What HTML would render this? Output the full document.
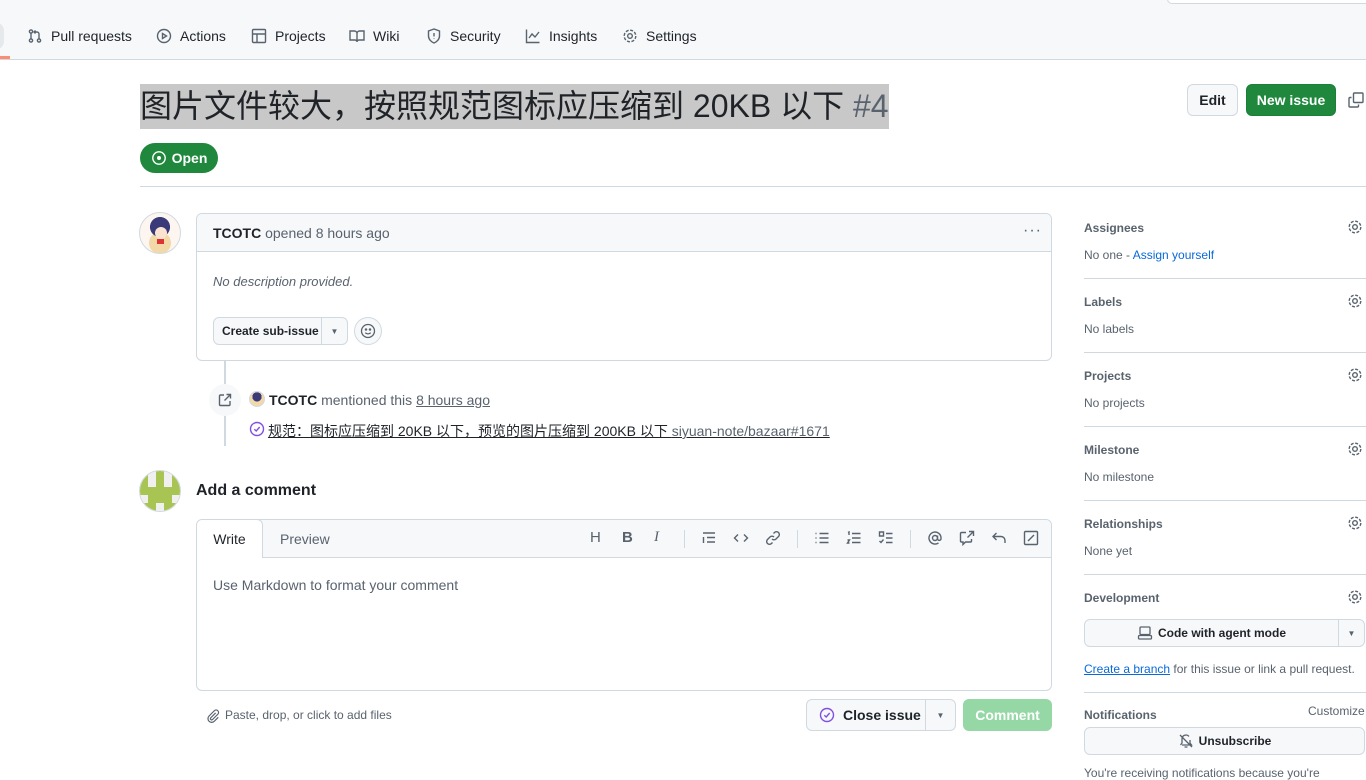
<!DOCTYPE html>
<html><head><meta charset="utf-8"><style>
*{box-sizing:border-box;margin:0;padding:0}
body{width:1366px;height:773px;overflow:hidden;background:#fff;font-family:"Liberation Sans","Noto Sans CJK SC",sans-serif;color:#1f2328;font-size:14px;position:relative}
.a{position:absolute;white-space:nowrap}
.nav{position:absolute;left:0;top:0;width:1366px;height:60px;background:#f6f8fa;border-bottom:1px solid #d1d9e0}
.tab{position:absolute;top:28px;font-size:14px;color:#1f2328;display:flex;align-items:center;gap:8px}
.tab svg{width:16px;height:16px;fill:none;stroke:#59636e;stroke-width:1.4}
.btn{position:absolute;border:1px solid #d1d9e0;background:#f6f8fa;border-radius:6px;display:flex;align-items:center;justify-content:center;font-weight:bold;font-size:14px}
.muted{color:#59636e}
.sh{position:absolute;left:1084px;font-size:12px;font-weight:bold;color:#59636e}
.sv{position:absolute;left:1084px;font-size:12px;color:#59636e}
.sep{position:absolute;left:1084px;width:282px;height:1px;background:#d1d9e0}
.gear{position:absolute;left:1347px;width:16px;height:16px}
.tb{position:absolute;top:530px;width:16px;height:16px;fill:none;stroke:#59636e;stroke-width:1.4}
</style></head><body>
<div class="nav"></div>
<div class="a" style="left:0;top:56px;width:10px;height:3px;background:#fd8c73"></div>
<div class="a" style="left:1167px;top:-6px;width:210px;height:10px;border:1px solid #d1d9e0;border-radius:6px;background:#fff"></div>
<div class="a" style="left:-14px;top:22px;width:18px;height:28px;border-radius:10px;background:#e6e9ec"></div>
<div class="tab" style="left:27px"><svg viewBox="0 0 16 16"><circle cx="4" cy="3.5" r="1.6"/><circle cx="4" cy="12.5" r="1.6"/><circle cx="12" cy="12.5" r="1.6"/><path d="M4 5v6M12 11V6a2 2 0 0 0-2-2H7M8.5 2.5 7 4l1.5 1.5"/></svg>Pull requests</div>
<div class="tab" style="left:156px"><svg viewBox="0 0 16 16"><circle cx="8" cy="8" r="6.5"/><path d="M6.5 5.5v5l4-2.5z"/></svg>Actions</div>
<div class="tab" style="left:251px"><svg viewBox="0 0 16 16"><rect x="1.5" y="1.5" width="13" height="13" rx="1"/><path d="M1.5 6h13M6 6v8.5"/></svg>Projects</div>
<div class="tab" style="left:349px"><svg viewBox="0 0 16 16"><path d="M1 3h4.5A2.5 2.5 0 0 1 8 5.5V14a2 2 0 0 0-2-2H1zM15 3h-4.5A2.5 2.5 0 0 0 8 5.5V14a2 2 0 0 1 2-2h5z"/></svg>Wiki</div>
<div class="tab" style="left:426px"><svg viewBox="0 0 16 16"><path d="M8 1 2.5 3v5c0 3.5 3 6 5.5 7 2.5-1 5.5-3.5 5.5-7V3zM8 5v3.5M8 10.5v.5"/></svg>Security</div>
<div class="tab" style="left:525px"><svg viewBox="0 0 16 16"><path d="M1.5 1.5v13h13M4 10l3-4 3 3 4-5"/></svg>Insights</div>
<div class="tab" style="left:622px"><svg viewBox="0 0 16 16"><circle cx="8" cy="8" r="2.3"/><circle cx="8" cy="8" r="5.8" stroke-dasharray="3 1.55"/></svg>Settings</div>

<div class="a" style="left:140px;top:84px;width:749px;height:45px;background:#c8c8c8"></div>
<div class="a" style="left:140px;top:84px;font-size:32px;line-height:45px;color:#1f2328;font-family:'Liberation Sans','Noto Sans CJK SC',sans-serif">图片文件较大，按照规范图标应压缩到 20KB 以下 <span style="color:#59636e">#4</span></div>
<div class="a" style="left:140px;top:143px;width:78px;height:30px;border-radius:15px;background:#1f883d;color:#fff;font-weight:bold;font-size:14px;display:flex;align-items:center;justify-content:center;gap:5px"><svg width="16" height="16" viewBox="0 0 16 16" fill="none" stroke="#fff" stroke-width="1.4"><circle cx="8" cy="8" r="6.2"/><circle cx="8" cy="8" r="1.3" fill="#fff"/></svg>Open</div>
<div class="btn" style="left:1187px;top:84px;width:51px;height:32px">Edit</div>
<div class="btn" style="left:1246px;top:84px;width:90px;height:32px;background:#1f883d;border-color:#1a7f37;color:#fff">New issue</div>
<svg class="a" style="left:1348px;top:92px" width="16" height="16" viewBox="0 0 16 16" fill="none" stroke="#59636e" stroke-width="1.4"><rect x="5.5" y="1" width="9.5" height="9.5" rx="1"/><path d="M3.5 5.5H2a1 1 0 0 0-1 1V14a1 1 0 0 0 1 1h7.5a1 1 0 0 0 1-1v-1.5"/></svg>
<div class="a" style="left:140px;top:186px;width:1226px;height:1px;background:#d1d9e0"></div>

<div class="a" style="left:139px;top:212px;width:42px;height:42px;border-radius:50%;border:1px solid #d1d9e0;background:radial-gradient(circle at 50% 35%,#3a3a7a 0 30%,transparent 31%),radial-gradient(circle at 50% 75%,#f3d9a8 0 30%,transparent 31%),#fdf6f0;overflow:hidden"><div style="position:absolute;left:15px;top:14px;width:12px;height:12px;border-radius:50%;background:#fbe3d2"></div><div style="position:absolute;left:17px;top:26px;width:7px;height:5px;background:#d33"></div></div>
<div class="a" style="left:196px;top:213px;width:856px;height:148px;border:1px solid #d1d9e0;border-radius:6px;overflow:hidden">
<div style="height:38px;background:#f6f8fa;border-bottom:1px solid #d1d9e0;padding:11px 16px;font-size:14px"><b>TCOTC</b> <span class="muted">opened 8 hours ago</span></div>
<div class="a" style="left:826px;top:8px;font-size:16px;color:#59636e;letter-spacing:1px">···</div>
<div class="a" style="left:16px;top:60px;font-style:italic;color:#59636e;font-size:13px">No description provided.</div>
<div class="a" style="left:16px;top:103px;width:135px;height:28px;border:1px solid #d1d9e0;border-radius:6px;background:#f6f8fa;font-size:12px;font-weight:bold;display:flex;align-items:center"><span style="padding-left:8px;width:107px">Create sub-issue</span><span style="border-left:1px solid #d1d9e0;height:100%;flex:1;display:flex;align-items:center;justify-content:center;font-size:8px;color:#59636e">▼</span></div>
<div class="a" style="left:157px;top:103px;width:28px;height:28px;border:1px solid #d1d9e0;border-radius:50%;background:#f6f8fa;display:flex;align-items:center;justify-content:center"><svg width="16" height="16" viewBox="0 0 16 16" fill="none" stroke="#59636e" stroke-width="1.3"><circle cx="8" cy="8" r="6.5"/><path d="M5.3 9.7c1.4 1.6 4 1.6 5.4 0"/><circle cx="6" cy="6.5" r=".6" fill="#59636e"/><circle cx="10" cy="6.5" r=".6" fill="#59636e"/></svg></div>
</div>
<div class="a" style="left:224px;top:361px;width:2px;height:85px;background:#d1d9e0"></div>
<div class="a" style="left:209px;top:384px;width:32px;height:32px;border-radius:50%;background:#f6f8fa;display:flex;align-items:center;justify-content:center"><svg width="16" height="16" viewBox="0 0 16 16" fill="none" stroke="#59636e" stroke-width="1.4"><path d="M7 3H3.5a1 1 0 0 0-1 1v8.5a1 1 0 0 0 1 1H12a1 1 0 0 0 1-1V9M9.5 2.5h4v4M13.5 2.5 7.5 8.5"/></svg></div>
<div class="a" style="left:249px;top:391px;width:16px;height:16px;border-radius:50%;background:radial-gradient(circle at 50% 35%,#3a3a7a 0 40%,#f3d9a8 41%);border:1px solid #d1d9e0"></div>
<div class="a" style="left:269px;top:392px;font-size:14px"><b>TCOTC</b> <span class="muted">mentioned this <span style="text-decoration:underline">8 hours ago</span></span></div>
<svg class="a" style="left:249px;top:421px" width="16" height="16" viewBox="0 0 16 16" fill="none" stroke="#8250df" stroke-width="1.4"><circle cx="8" cy="8" r="6.5"/><path d="M5.3 8.2 7.2 10l3.5-4"/></svg>
<div class="a" style="left:268px;top:421px;font-size:14px;text-decoration:underline">规范：图标应压缩到 20KB 以下，预览的图片压缩到 200KB 以下 <span class="muted">siyuan-note/bazaar#1671</span></div>

<div class="a" style="left:139px;top:470px;width:42px;height:42px;border-radius:50%;border:1px solid #d1d9e0;background:#f0f0f0;overflow:hidden"><svg width="40" height="40" viewBox="0 0 5 5"><rect width="5" height="5" fill="#f0f0f0"/><path fill="#a8c452" d="M0 0h1v2h1V0h1v2h1V0h1v3H4v1h1v1H3V4H2v1H0V4h1V3H0z"/></svg></div>
<div class="a" style="left:196px;top:482px;font-size:16px;font-weight:bold">Add a comment</div>
<div class="a" style="left:196px;top:519px;width:856px;height:172px;border:1px solid #d1d9e0;border-radius:6px;overflow:hidden">
<div style="height:38px;background:#f6f8fa;border-bottom:1px solid #d1d9e0"></div>
<div class="a" style="left:-1px;top:-1px;width:67px;height:39px;background:#fff;border:1px solid #d1d9e0;border-bottom:none;border-radius:6px 6px 0 0;text-align:center;line-height:38px;font-size:14px">Write</div>
<div class="a" style="left:83px;top:11px;font-size:14px;color:#59636e">Preview</div>
<div class="a" style="left:16px;top:57px;font-size:14px;color:#59636e">Use Markdown to format your comment</div>
</div>
<div class="a" style="left:590px;top:529px;font-size:15px;color:#59636e">H</div>
<div class="a" style="left:622px;top:529px;font-size:15px;font-weight:bold;color:#59636e">B</div>
<div class="a" style="left:654px;top:529px;font-size:15px;font-style:italic;font-family:'Liberation Serif',serif;color:#59636e">I</div>
<div class="a" style="left:684px;top:530px;width:1px;height:18px;background:#d1d9e0"></div>
<svg class="tb" style="left:701px" viewBox="0 0 16 16"><path d="M2 3h12M6 7.5h8M6 12h8M2.5 7v6"/></svg>
<svg class="tb" style="left:733px" viewBox="0 0 16 16"><path d="M5 4.5 1.5 8 5 11.5M11 4.5 14.5 8 11 11.5"/></svg>
<svg class="tb" style="left:765px" viewBox="0 0 16 16"><path d="M7 9a3 3 0 0 0 4 0l2.5-2.5a2.8 2.8 0 0 0-4-4L8.5 3.5M9 7a3 3 0 0 0-4 0L2.5 9.5a2.8 2.8 0 0 0 4 4l1-1"/></svg>
<div class="a" style="left:797px;top:530px;width:1px;height:18px;background:#d1d9e0"></div>
<svg class="tb" style="left:814px" viewBox="0 0 16 16"><path d="M5.5 3.5h9M5.5 8h9M5.5 12.5h9M1.5 3.5h1M1.5 8h1M1.5 12.5h1"/></svg>
<svg class="tb" style="left:846px" viewBox="0 0 16 16"><path d="M6 3.5h8.5M6 8h8.5M6 12.5h8.5M2 2.5l1-.5v3M1.5 10h2l-2 3h2"/></svg>
<svg class="tb" style="left:878px" viewBox="0 0 16 16"><path d="M1.5 2h4v4h-4zM8 3.5h6.5M8 8h6.5M8 12.5h6.5M1.5 11l1.5 1.5 2.5-3"/></svg>
<div class="a" style="left:910px;top:530px;width:1px;height:18px;background:#d1d9e0"></div>
<svg class="tb" style="left:927px" viewBox="0 0 16 16"><circle cx="8" cy="8" r="2.5"/><path d="M10.5 5.5v3.5a1.8 1.8 0 0 0 3.5 0V8a6 6 0 1 0-2.5 4.9"/></svg>
<svg class="tb" style="left:959px" viewBox="0 0 16 16"><path d="M7 2.5H2.5a1 1 0 0 0-1 1v7.5a1 1 0 0 0 1 1h1.5v2.5l2.5-2.5h5a1 1 0 0 0 1-1V9M10 1.5h4.5V6M14.5 1.5 8.5 7.5"/></svg>
<svg class="tb" style="left:991px" viewBox="0 0 16 16"><path d="M5.5 3 2 6.5 5.5 10M2 6.5h8a4 4 0 0 1 4 4V13"/></svg>
<svg class="tb" style="left:1023px" viewBox="0 0 16 16"><rect x="1.5" y="1.5" width="13" height="13" rx="1"/><path d="M5 11 11 5"/></svg>
<svg class="a" style="left:206px;top:708px" width="14" height="16" viewBox="0 0 16 16" fill="none" stroke="#59636e" stroke-width="1.4"><path d="M11 4.5 5.5 10a1.4 1.4 0 0 0 2 2l6-6a2.8 2.8 0 0 0-4-4L3.5 8a4.2 4.2 0 0 0 6 6L14 9.5"/></svg>
<div class="a" style="left:225px;top:708px;font-size:12px;color:#59636e">Paste, drop, or click to add files</div>
<div class="a" style="left:806px;top:699px;width:150px;height:32px;border:1px solid #d1d9e0;border-radius:6px;background:#f6f8fa;display:flex;align-items:center;font-size:14px;font-weight:bold">
<span style="width:118px;display:flex;align-items:center;gap:8px;padding-left:12px"><svg width="16" height="16" viewBox="0 0 16 16" fill="none" stroke="#8250df" stroke-width="1.4"><circle cx="8" cy="8" r="6.5"/><path d="M5.3 8.2 7.2 10l3.5-4"/></svg>Close issue</span><span style="border-left:1px solid #d1d9e0;flex:1;height:100%;display:flex;align-items:center;justify-content:center;font-size:8px;color:#59636e">▼</span></div>
<div class="btn" style="left:963px;top:699px;width:89px;height:32px;background:#95d8a6;border-color:#95d8a6;color:#fff">Comment</div>

<div class="sh" style="top:221px">Assignees</div><div class="sv" style="top:248px">No one - <span style="color:#0969da">Assign yourself</span></div>
<div class="sep" style="top:278px"></div>
<div class="sh" style="top:295px">Labels</div><div class="sv" style="top:322px">No labels</div>
<div class="sep" style="top:352px"></div>
<div class="sh" style="top:369px">Projects</div><div class="sv" style="top:396px">No projects</div>
<div class="sep" style="top:426px"></div>
<div class="sh" style="top:443px">Milestone</div><div class="sv" style="top:470px">No milestone</div>
<div class="sep" style="top:500px"></div>
<div class="sh" style="top:517px">Relationships</div><div class="sv" style="top:544px">None yet</div>
<div class="sep" style="top:574px"></div>
<div class="sh" style="top:591px">Development</div>
<svg class="gear" style="top:219px" viewBox="0 0 16 16" fill="none" stroke="#59636e" stroke-width="1.4"><circle cx="8" cy="8" r="2.3"/><circle cx="8" cy="8" r="5.8" stroke-dasharray="3 1.55"/></svg>
<svg class="gear" style="top:293px" viewBox="0 0 16 16" fill="none" stroke="#59636e" stroke-width="1.4"><circle cx="8" cy="8" r="2.3"/><circle cx="8" cy="8" r="5.8" stroke-dasharray="3 1.55"/></svg>
<svg class="gear" style="top:367px" viewBox="0 0 16 16" fill="none" stroke="#59636e" stroke-width="1.4"><circle cx="8" cy="8" r="2.3"/><circle cx="8" cy="8" r="5.8" stroke-dasharray="3 1.55"/></svg>
<svg class="gear" style="top:441px" viewBox="0 0 16 16" fill="none" stroke="#59636e" stroke-width="1.4"><circle cx="8" cy="8" r="2.3"/><circle cx="8" cy="8" r="5.8" stroke-dasharray="3 1.55"/></svg>
<svg class="gear" style="top:515px" viewBox="0 0 16 16" fill="none" stroke="#59636e" stroke-width="1.4"><circle cx="8" cy="8" r="2.3"/><circle cx="8" cy="8" r="5.8" stroke-dasharray="3 1.55"/></svg>
<svg class="gear" style="top:589px" viewBox="0 0 16 16" fill="none" stroke="#59636e" stroke-width="1.4"><circle cx="8" cy="8" r="2.3"/><circle cx="8" cy="8" r="5.8" stroke-dasharray="3 1.55"/></svg>
<div class="a" style="left:1084px;top:619px;width:281px;height:28px;border:1px solid #d1d9e0;border-radius:6px;background:#f6f8fa;display:flex;align-items:center;font-size:12px;font-weight:bold">
<span style="width:253px;display:flex;align-items:center;justify-content:center;gap:5px"><svg width="16" height="16" viewBox="0 0 16 16" fill="none" stroke="#59636e" stroke-width="1.3"><rect x="3" y="2" width="10" height="7.5" rx="1"/><rect x="1.5" y="10.5" width="13" height="3.5" rx="1"/></svg>Code with agent mode</span><span style="border-left:1px solid #d1d9e0;flex:1;height:100%;display:flex;align-items:center;justify-content:center;font-size:8px;color:#59636e">▼</span></div>
<div class="sv" style="top:662px"><span style="color:#0969da;text-decoration:underline">Create a branch</span> for this issue or link a pull request.</div>
<div class="sep" style="top:692px"></div>
<div class="sh" style="top:708px">Notifications</div>
<div class="sv" style="top:704px;left:1308px">Customize</div>
<div class="a" style="left:1084px;top:727px;width:281px;height:28px;border:1px solid #d1d9e0;border-radius:6px;background:#f6f8fa;display:flex;align-items:center;justify-content:center;gap:5px;font-size:12px;font-weight:bold"><svg width="16" height="16" viewBox="0 0 16 16" fill="none" stroke="#59636e" stroke-width="1.3"><path d="M4 6a4 4 0 0 1 7-2.6M12 7v3l1.5 2H4M4 6v4l-1.5 2M6.5 14h3M2 2l12 12"/></svg>Unsubscribe</div>
<div class="sv" style="top:766px">You're receiving notifications because you're</div>
</body></html>
